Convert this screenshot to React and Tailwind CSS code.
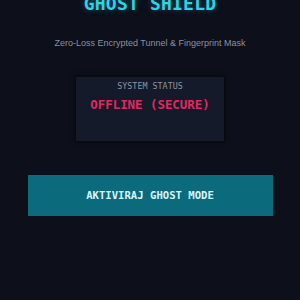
import React from 'react';

const mono = "font-['DejaVu_Sans_Mono',monospace]";

const App = () => {
  return (
    <div className="w-[300px] h-[300px] overflow-hidden bg-[#0d0f1a] flex flex-col items-center">
      {/* Header */}
      <h1 className={`${mono} mt-[-5px] text-[18px] leading-[18px] font-bold tracking-[0.2px] text-[#2ed3e6] [text-shadow:0_0_6px_rgba(34,211,238,0.35)]`}>
        GHOST SHIELD
      </h1>
      <p className="mt-[24px] font-['Liberation_Sans',Arial,sans-serif] text-[9px] leading-[12px] text-[#8b90a0]">
        Zero-Loss Encrypted Tunnel &amp; Fingerprint Mask
      </p>

      {/* Status */}
      <div className="mt-[27px] w-[150px] h-[66px] bg-[#141a29] border border-[#080a12] shadow-[0_0_4px_rgba(0,0,0,0.6)] flex flex-col items-center pt-[4px]">
        <span className={`${mono} text-[8.4px] leading-[10px] text-[#8d93a3]`}>SYSTEM STATUS</span>
        <span className={`${mono} mt-[7px] text-[12.4px] leading-[14px] font-bold text-[#e3285f]`}>OFFLINE (SECURE)</span>
      </div>

      {/* Action */}
      <button className={`${mono} mt-[33px] w-[245px] h-[41px] bg-[#0b6b7d] text-[10.6px] font-bold text-[#d6f6fb]`}>
        AKTIVIRAJ GHOST MODE
      </button>
    </div>
  );
};

export default App;
